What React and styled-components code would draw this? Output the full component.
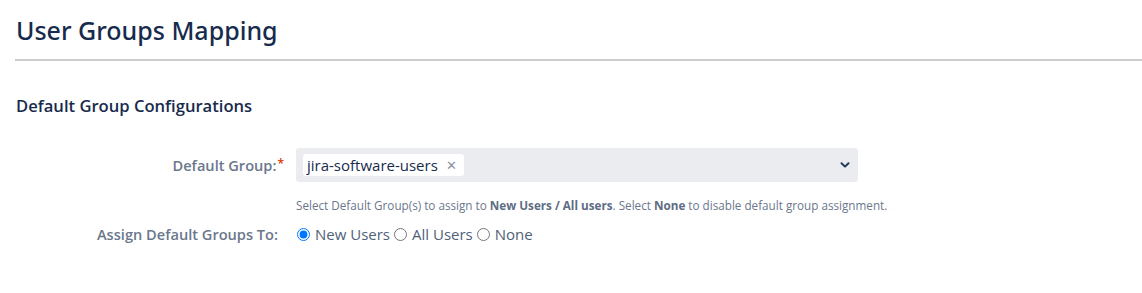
import React, { useState } from 'react';
import styled, { createGlobalStyle } from 'styled-components';

const GlobalStyle = createGlobalStyle`
  body {
    margin: 0;
    background: #fff;
    font-family: "Open Sans", "Noto Sans", sans-serif;
  }
`;

const Page = styled.div`
  padding: 12px 0 0 16px;
`;

const Title = styled.h1`
  margin: 0 0 0 -1px;
  padding: 0 0 11px 1px;
  font-family: "Noto Sans", "Open Sans", sans-serif;
  font-size: 25px;
  font-weight: 500;
  color: #172b4d;
  line-height: 36px;
  border-bottom: 2px solid #cccccc;
`;

const SectionTitle = styled.h2`
  margin: 33px 0 0;
  font-size: 16.6px;
  font-weight: 600;
  color: #172b4d;
  line-height: 24px;
`;

const Form = styled.div`
  margin-top: 30px;
  display: flex;
  flex-direction: column;
  gap: 11px;
`;

const Row = styled.div`
  display: grid;
  grid-template-columns: 268px 562px;
  column-gap: 12px;
  align-items: center;
`;

const Label = styled.label`
  text-align: right;
  font-size: 14.6px;
  font-weight: 600;
  color: #6b778c;
  padding-right: ${({ $required }) => ($required ? '0' : '6px')};
`;

const Star = styled.span`
  color: #de350b;
  font-size: 12px;
  vertical-align: top;
  margin-left: 1px;
`;

const Select = styled.div`
  height: 34px;
  background: #ebecf0;
  border-radius: 3px;
  display: flex;
  align-items: center;
  padding: 0 7px 0 7px;
  box-sizing: border-box;
`;

const Chip = styled.span`
  display: inline-flex;
  align-items: center;
  gap: 8px;
  background: #fff;
  border-radius: 3px;
  height: 22px;
  padding: 0 7px 0 4px;
  font-size: 15px;
  color: #172b4d;
`;

const ChipRemove = styled.span`
  color: #8993a4;
  font-size: 13px;
  line-height: 1;
`;

const Chevron = styled.svg`
  margin-left: auto;
`;

const Help = styled.div`
  grid-column: 2;
  font-size: 11.7px;
  color: #6b778c;
  margin-top: 15px;
  white-space: nowrap;

  b {
    font-weight: 700;
    color: #5e6c84;
  }
`;

const Radios = styled.div`
  display: flex;
  align-items: center;
  gap: 3px;
  font-size: 15px;
  color: #505f79;
`;

const RadioLabel = styled.label`
  display: inline-flex;
  align-items: center;

  input {
    margin: 0 5px 0 1px;
    width: 13px;
    height: 13px;
    accent-color: #0075ff;
  }
`;

const options = ['New Users', 'All Users', 'None'];

export default function App() {
  const [assign, setAssign] = useState('New Users');

  return (
    <Page>
      <GlobalStyle />
      <Title>User Groups Mapping</Title>
      <SectionTitle>Default Group Configurations</SectionTitle>
      <Form>
        <Row>
          <Label $required>
            Default Group:<Star>*</Star>
          </Label>
          <Select>
            <Chip>
              jira-software-users <ChipRemove>✕</ChipRemove>
            </Chip>
            <Chevron width="12" height="12" viewBox="0 0 12 12">
              <path d="M2.5 4.2 L6 7.6 L9.5 4.2" fill="none" stroke="#253858" strokeWidth="2" strokeLinecap="round" strokeLinejoin="round" />
            </Chevron>
          </Select>
          <Help>
            Select Default Group(s) to assign to <b>New Users / All users</b>. Select <b>None</b> to disable default group assignment.
          </Help>
        </Row>
        <Row>
          <Label>Assign Default Groups To:</Label>
          <Radios>
            {options.map((o) => (
              <RadioLabel key={o}>
                <input
                  type="radio"
                  name="assign"
                  checked={assign === o}
                  onChange={() => setAssign(o)}
                />
                {o}
              </RadioLabel>
            ))}
          </Radios>
        </Row>
      </Form>
    </Page>
  );
}
